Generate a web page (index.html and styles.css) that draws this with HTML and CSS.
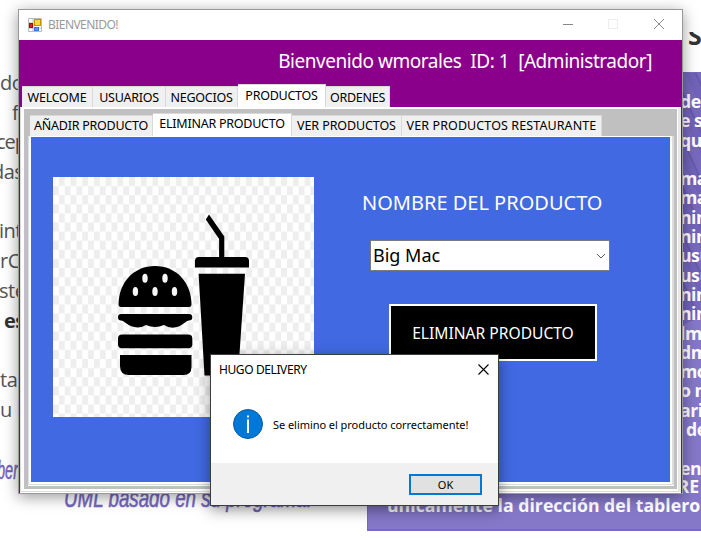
FILE: index.html
```html
<!DOCTYPE html>
<html lang="es">
<head>
<meta charset="utf-8">
<title>Bienvenido</title>
<link rel="stylesheet" href="styles.css">
</head>
<body>
<div class="desktop">
  <main class="document">
    <section class="notes">
      <p>do</p><p class="n1">f</p><p class="n2">cep</p><p class="n3">das</p><p class="n4">int</p><p class="n5">rC</p><p class="n6">ste</p><p class="n7"><b>es</b></p><p class="n8">ta</p><p class="n9">u l</p>
      <div class="quote q1">ber</div>
      <div class="quote q2">UML basado en su programa.</div>
    </section>
    <aside class="aside">
      <h2>S</h2>
      <div class="card">
        <div class="lines">
          <p>de</p><p>e s</p><p>que</p><p></p><p>ma</p><p>ma</p><p>nin</p><p>nin</p><p>usu</p><p>usu</p><p>nin</p><p>nin</p><p>lm</p><p>dm</p><p>mo</p><p>o n</p><p>ari</p><p class="in">de</p><p></p><p>en</p>
        </div>
        <div class="foot"><span>controller</span><span>en</span><span>archivo</span><span>RE</span></div>
        <div class="foot last">únicamente la dirección del tablero</div>
      </div>
    </aside>
  </main>

  <div class="window">
    <header class="titlebar">
      <svg class="appicon" width="14" height="14" viewBox="0 0 14 14"><path d="M.5.5h13v13H.5zM5 0v14M0 5h5M0 10h14" fill="#fff" stroke="#bbb"/><rect x="6.5" y="1.5" width="6" height="6" fill="#ffd34d" stroke="#c98f00"/><rect x="1.5" y="5.5" width="3" height="4" fill="#c92a20" stroke="#9c120b"/><rect x="6.5" y="9.500" width="4" height="3" fill="#5b94ef" stroke="#3e73d1"/></svg>
      <span class="caption">BIENVENIDO!</span>
      <svg class="controls" width="104" height="12" viewBox="0 0 104 12" fill="none"><path d="M1 6.500h10" stroke="#888"/><path d="M46.500 1.500h9v9h-9z" stroke="#ededed"/><path d="M92 1l10 10M102 1L92 11" stroke="#888"/></svg>
    </header>
    <div class="banner"><span>Bienvenido wmorales&nbsp; ID: 1&nbsp; [Administrador]</span></div>
    <nav class="tabs">
      <div class="tab t1"><span>WELCOME</span></div><div class="tab t2"><span>USUARIOS</span></div><div class="tab t3"><span>NEGOCIOS</span></div><div class="tab t4 on"><span>PRODUCTOS</span></div><div class="tab t5"><span>ORDENES</span></div>
    </nav>
    <div class="page">
      <div class="silver">
        <nav class="tabs inner">
          <div class="tab s1"><span>AÑADIR PRODUCTO</span></div><div class="tab s2 on"><span>ELIMINAR PRODUCTO</span></div><div class="tab s3"><span>VER PRODUCTOS</span></div><div class="tab s4"><span>VER PRODUCTOS RESTAURANTE</span></div>
        </nav>
        <div class="subpage">
          <div class="panel">
            <svg class="picture" width="261" height="240" viewBox="53 177 261 240">
              <defs><pattern id="check" x="53" y="177" width="11.700" height="18.200" patternUnits="userSpaceOnUse"><rect width="11.700" height="18.200" fill="#fff"/><path d="M5.850 0h5.850v9.100H5.850zM0 9.100h5.850v9.100H0z" fill="#eee"/></pattern></defs>
              <rect x="53" y="177" width="261" height="240" fill="url(#check)"/>
              <path d="M118.500 304C119 282 134 266 155 266s36 16 36.500 38q0 3-2.500 3H121q-2.500 0-2.500-3z"/>
              <g fill="#f6f6f6"><ellipse cx="145" cy="278.300" rx="2.700" ry="4.500"/><ellipse cx="165" cy="278.300" rx="2.700" ry="4.500"/><ellipse cx="135.400" cy="291.600" rx="2.700" ry="4.500"/><ellipse cx="155" cy="291.600" rx="2.700" ry="4.500"/><ellipse cx="174.500" cy="291.600" rx="2.700" ry="4.500"/></g>
              <path d="M121 314h68q3.300 0 3.300 3.300T189 320.600q-2 0-4 2-11 9-21 2.400-9 4-18 0-10 6-21-2.400-2-2-4-2-3 0-3-3.300t3-3.300z"/>
              <rect x="118" y="334.600" width="74.300" height="13.600" rx="4"/>
              <path d="M120 355h71.500v12q0 8-8 8H129q-9 0-9-9z"/>
              <path d="M209 214.500l15.300 22V257h-5.200v-18L205.800 219.500z"/>
              <path d="M195 267.600V261q0-4 4-4h46q4 0 4 4v6.600zM198.600 273.800H245L238 375.600h-33.500z"/>
            </svg>
            <form class="fields">
              <label>NOMBRE DEL PRODUCTO</label>
              <div class="select"><span>Big Mac</span><svg width="10" height="6" viewBox="0 0 10 6"><path d="M1 1l4 4 4-4" fill="none" stroke="#555"/></svg></div>
              <div class="remove"><span>ELIMINAR PRODUCTO</span></div>
            </form>
          </div>
        </div>
      </div>
    </div>
  </div>

  <div class="dialog">
    <header><span>HUGO DELIVERY</span><svg width="11" height="11" viewBox="0 0 11 11"><path d="M.5.5l10 10M10.500.5l-10 10" stroke="#000" stroke-width="1.100"/></svg></header>
    <div class="message">
      <svg width="30" height="30" viewBox="0 0 30 30"><circle cx="15" cy="15" r="14.500" fill="#0078d7" stroke="#085a9f"/><path d="M14 6.500h2v2h-2zM14 10.500h2v13.500h-2z" fill="#fff"/></svg>
      <span>Se elimino el producto correctamente!</span>
    </div>
    <footer><div class="ok">OK</div></footer>
  </div>
</div>
</body>
</html>
```
FILE: styles.css
```css
* { box-sizing: border-box; }
body { margin: 0; font-family: "Noto Sans", sans-serif; }
p, h2 { margin: 0; }
svg { display: block; flex: none; }
span { white-space: nowrap; }
.desktop { position: relative; width: 701px; height: 540px; overflow: hidden; background: #fff; }
.document { display: flex; height: 540px; }
.notes { width: 367px; padding-top: 68px; font-family: "Open Sans", sans-serif; font-size: 20px; line-height: 30px; letter-spacing: -.5px; color: #555; }
.notes p { height: 29.700px; white-space: nowrap; }
.notes p.n1 { padding-left: 12px; }
.notes p.n2 { margin-left: -4px; letter-spacing: -1px; }
.notes p.n3 { margin-left: -8px; margin-bottom: 29.700px; }
.notes p.n4, .notes p.n6 { margin-left: -1px; }
.notes p.n7 { padding-left: 4px; margin-bottom: 29.700px; color: #333; }
.quote { width: max-content; font: italic 25px/28px "Liberation Sans Narrow", "Liberation Sans", sans-serif; letter-spacing: 0; color: #7466bd; -webkit-text-stroke: .6px #7466bd; white-space: nowrap; transform-origin: 0 50%; }
.q1 { margin: 32px 0 0 -3px; transform: scaleX(.58); }
.q2 { margin-left: 64px; transform: scaleX(.75); }
.aside { width: 334px; }
.aside h2 { height: 40px; margin-top: 32px; padding-left: 321px; font: bold 25px/6px "Open Sans", sans-serif; color: #333; overflow: hidden; }
.card { width: 340px; height: 459px; overflow: hidden; border: 1px solid #7769bd; border-bottom-width: 2px; background: linear-gradient(155deg, transparent 0 65%, #8578c9 65%), repeating-linear-gradient(65deg, #7163b9 0 8px, #6759ac 9px 10px, #7769bd 11px 20px); color: #fff; font: bold 17.700px/19.300px "Open Sans", sans-serif; }
.lines { padding: 19px 0 0 312px; height: 404px; letter-spacing: -.5px; }
.lines p { height: 19.300px; white-space: nowrap; }
.lines .in { padding-left: 6px; }
.foot { display: flex; height: 19px; width: 341px; gap: 12px; padding-left: 94px; white-space: nowrap; }
.foot span:last-child { margin-left: 4px; }
.foot.last { padding-left: 19px; }

.window { position: absolute; left: 18px; top: 9px; width: 665px; height: 485px; border: 1px solid #999; background: #8b008b; display: flex; flex-direction: column; box-shadow: 0 3px 14px rgba(0,0,0,.4); }
.titlebar { height: 30px; flex: none; background: #fff; display: flex; align-items: center; padding: 0 16px 0 9px; }
.caption { margin: -2px 0 0 6px; font-size: 12px; letter-spacing: -.55px; color: #999; }
.controls { margin-left: auto; margin-top: -2px; }
.banner { height: 44px; flex: none; padding-right: 30px; text-align: right; color: #fff; font-size: 19px; line-height: 42px; letter-spacing: -.46px; }
.tabs { height: 23px; flex: none; display: flex; align-items: flex-end; padding-left: 3px; font-size: 12.500px; letter-spacing: -.25px; }
.tab { height: 21px; background: #f0f0f0; border: 1px solid #d9d9d9; border-left-width: 0; border-bottom: 0; display: flex; justify-content: center; align-items: center; padding-top: 2px; line-height: 18px; }
.tab.on { height: 23px; background: #fff; padding: 0; }
.t1 { width: 71px; } .t2 { width: 73px; } .t3 { width: 72px; } .t4 { width: 88px; } .t5 { width: 64px; }
.page { flex: 1; margin: 0 1px 1px; background: #fff; border: 1px solid #dcdcdc; border-top-color: #fff; border-right: 3px solid #e8e8e8; padding: 1px 1px 2px 3px; display: flex; box-shadow: 0 1px #fff; }
.silver { flex: 1; background: #c0c0c0; padding: 4px 3px 4px 4px; display: flex; flex-direction: column; }
.inner { padding-left: 2px; }
.inner .tab { padding-top: 0; }
.inner .tab.on { padding-bottom: 2px; }
.s1 { width: 123px; } .s2 { width: 139px; } .s3 { width: 110px; letter-spacing: -.1px; } .s4 { width: 200px; letter-spacing: .1px; }
.subpage { flex: 1; background: #fff; border: 1px solid #dcdcdc; border-top: 0; border-right-width: 2px; padding: 1px 2px 2px 2px; display: flex; box-shadow: 0 1px #fff; }
.panel { flex: 1; background: #4169e1; display: flex; padding: 40px 0 0 22px; }
.fields { display: flex; flex-direction: column; margin-left: 48px; padding-top: 13px; color: #fff; }
.fields label { font-size: 20px; line-height: 26px; white-space: nowrap; }
.select { width: 240px; height: 31px; margin: 24px 0 0 8px; background: #fff; border: 1px solid #7a7a7a; color: #000; display: flex; align-items: center; justify-content: space-between; padding: 0 3px 0 2px; font-size: 18px; line-height: 29px; }
.remove { width: 208px; height: 57px; margin: 33px 0 0 27px; background: #000; border: 2px solid #fff; display: flex; align-items: center; justify-content: center; font-size: 15.600px; }

.dialog { position: absolute; left: 210px; top: 354px; width: 289px; height: 152px; border: 1px solid #3c3c3c; background: #fff; color: #000; display: flex; flex-direction: column; box-shadow: 0 4px 14px rgba(0,0,0,.4); }
.dialog header { height: 29px; display: flex; align-items: center; justify-content: space-between; padding: 0 9px 0 8px; font-size: 12px; letter-spacing: -.4px; }
.message { flex: 1; display: flex; align-items: center; gap: 10px; padding: 1px 0 0 22px; font-size: 11px; letter-spacing: -.05px; }
.dialog footer { height: 42px; background: #f0f0f0; padding: 11px 0 0 198px; }
.ok { width: 73px; height: 21px; border: 2px solid #0078d7; background: #e1e1e1; text-align: center; font-size: 11px; line-height: 17px; }
```
